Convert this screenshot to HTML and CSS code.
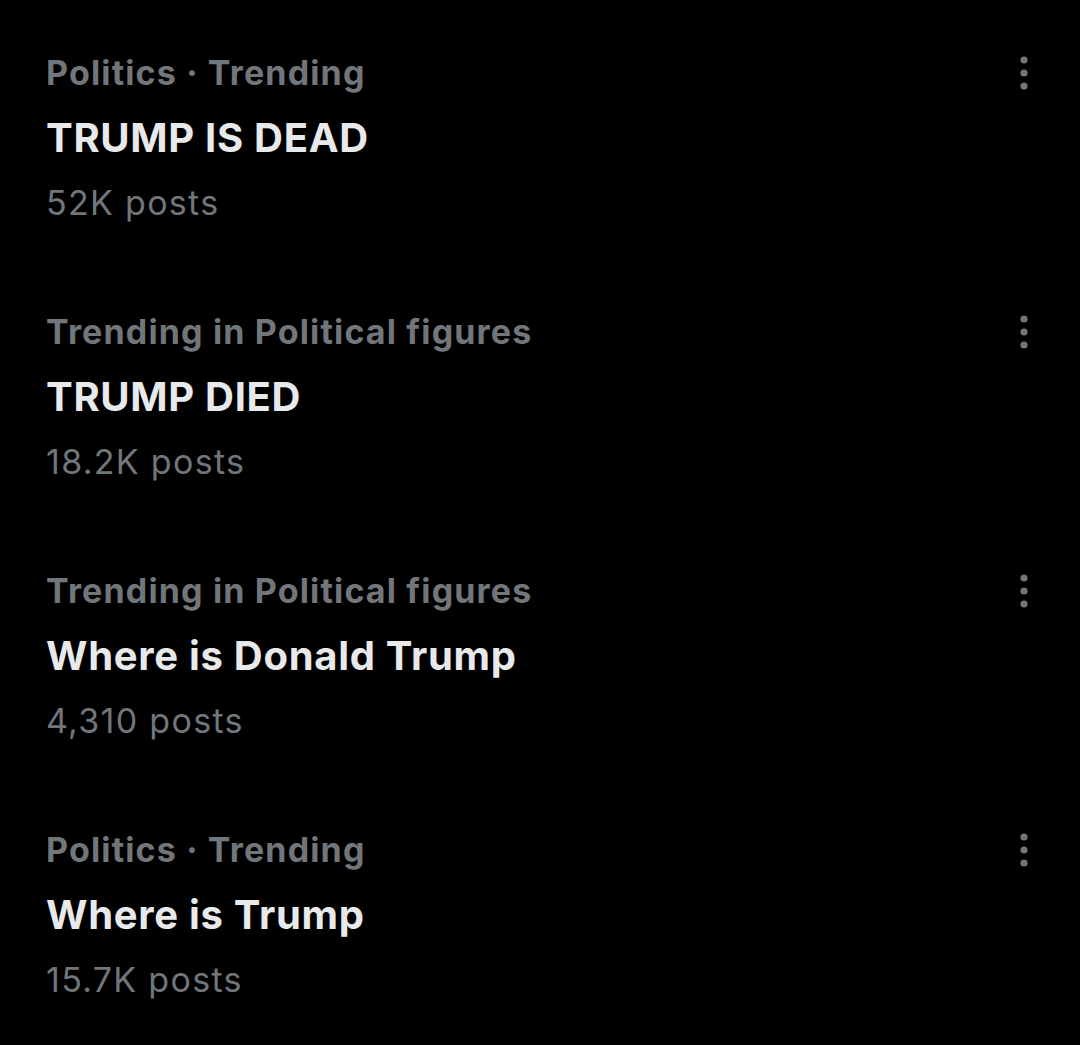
FILE: index.html
```html
<!DOCTYPE html>
<html>
<head>
<meta charset="utf-8">
<link rel="stylesheet" href="styles.css">
</head>
<body>
<div class="list">
  <div class="trend">
    <div class="text">
      <div class="cat">Politics · Trending</div>
      <div class="title">TRUMP IS DEAD</div>
      <div class="count">52K posts</div>
    </div>
    <div class="more"><svg width="8" height="34" viewBox="0 0 8 34"><circle cx="4" cy="4" r="3.6"/><circle cx="4" cy="17" r="3.6"/><circle cx="4" cy="30" r="3.6"/></svg></div>
  </div>
  <div class="trend">
    <div class="text">
      <div class="cat">Trending in Political figures</div>
      <div class="title">TRUMP DIED</div>
      <div class="count">18.2K posts</div>
    </div>
    <div class="more"><svg width="8" height="34" viewBox="0 0 8 34"><circle cx="4" cy="4" r="3.6"/><circle cx="4" cy="17" r="3.6"/><circle cx="4" cy="30" r="3.6"/></svg></div>
  </div>
  <div class="trend">
    <div class="text">
      <div class="cat">Trending in Political figures</div>
      <div class="title">Where is Donald Trump</div>
      <div class="count">4,310 posts</div>
    </div>
    <div class="more"><svg width="8" height="34" viewBox="0 0 8 34"><circle cx="4" cy="4" r="3.6"/><circle cx="4" cy="17" r="3.6"/><circle cx="4" cy="30" r="3.6"/></svg></div>
  </div>
  <div class="trend">
    <div class="text">
      <div class="cat">Politics · Trending</div>
      <div class="title">Where is Trump</div>
      <div class="count">15.7K posts</div>
    </div>
    <div class="more"><svg width="8" height="34" viewBox="0 0 8 34"><circle cx="4" cy="4" r="3.6"/><circle cx="4" cy="17" r="3.6"/><circle cx="4" cy="30" r="3.6"/></svg></div>
  </div>
</div>
</body>
</html>
```
FILE: styles.css
```css
html, body {
  margin: 0;
  background: #000;
}
body {
  font-family: Inter, "Noto Sans", sans-serif;
  width: 1080px;
  height: 1045px;
  overflow: hidden;
}
.list {
  padding-top: 8px;
}
.trend {
  display: flex;
  justify-content: space-between;
  align-items: flex-start;
  padding: 32px 52px 32px 46px;
  height: 195px;
}
.text > div {
  line-height: 65px;
  height: 65px;
  white-space: nowrap;
}
.cat {
  color: #71767b;
  font-size: 34px;
  font-weight: 700;
  letter-spacing: 1.15px;
}
.title {
  color: #e7e9ea;
  font-size: 40px;
  font-weight: 700;
  letter-spacing: 0.7px;
}
.count {
  color: #71767b;
  font-size: 34px;
  font-weight: 400;
  letter-spacing: 1.3px;
}
.more {
  padding-top: 16px;
}
.more svg {
  display: block;
  fill: #71767b;
}
```
